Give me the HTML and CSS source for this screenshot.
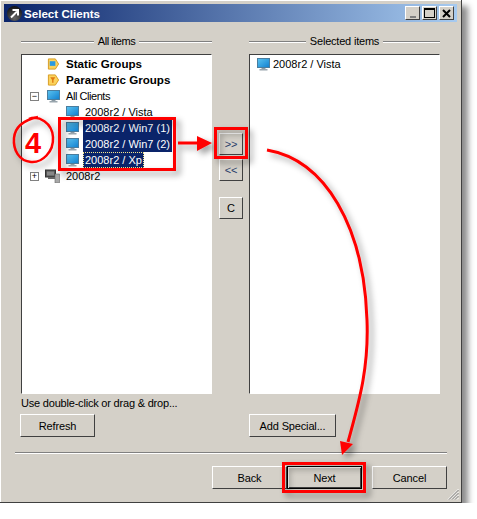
FILE: index.html
```html
<!DOCTYPE html>
<html lang="en">
<head>
  <meta charset="UTF-8">
  <title>Select Clients</title>
  <link rel="stylesheet" href="styles.css">
</head>
<body>
  <svg class="defs" width="0" height="0">
    <defs>
      <linearGradient id="screen" x1="0" y1="0" x2="1" y2="1">
        <stop offset="0" stop-color="#5cc4f0"/>
        <stop offset="1" stop-color="#0f7fd0"/>
      </linearGradient>
      <radialGradient id="ball" cx="0.5" cy="0.8" r="0.8">
        <stop offset="0" stop-color="#666"/>
        <stop offset="1" stop-color="#111"/>
      </radialGradient>
      <symbol id="pc" viewBox="0 0 13 13">
        <rect x="0.5" y="0.5" width="12" height="9" fill="url(#screen)" stroke="#4a7d9e"/>
        <rect x="4.5" y="10" width="4" height="1" fill="#8c9aa4"/>
        <rect x="2.5" y="11" width="8" height="1.5" fill="#9aa6ae"/>
      </symbol>
      <symbol id="tag" viewBox="0 0 14 14">
        <path d="M1.5 1.5H9L12.5 7L9 12.5H1.5Z" fill="#fbd25c" stroke="#d69a1e"/>
      </symbol>
    </defs>
  </svg>

  <div class="window">
    <div class="titlebar">
      <svg class="title-icon" width="15" height="15" viewBox="0 0 15 15">
        <circle cx="7.5" cy="7.5" r="7.5" fill="url(#ball)"/>
        <path d="M4 11.5L10 5.5M5.5 4H11V9.5" fill="none" stroke="#fff" stroke-width="2"/>
      </svg>
      <span class="title">Select Clients</span>
      <div class="caption-btns">
        <button class="caption-btn"><span class="ic-min"></span></button>
        <button class="caption-btn"><span class="ic-max"></span></button>
        <button class="caption-btn">
          <svg width="9" height="9" viewBox="0 0 9 9"><path d="M1 1L8 8M8 1L1 8" stroke="#000" stroke-width="2"/></svg>
        </button>
      </div>
    </div>

    <div class="content">
      <div class="lists">
        <section class="col">
          <div class="col-head"><span class="tight">All items</span></div>
          <div class="listbox tree">
            <div class="row"><span class="exp"></span><svg class="ico" width="13" height="14" viewBox="0 0 14 14"><use href="#tag"/><rect x="3" y="4" width="6" height="5" fill="#2a9ae0"/></svg><span class="lbl bold">Static Groups</span></div>
            <div class="row"><span class="exp"></span><svg class="ico" width="13" height="14" viewBox="0 0 14 14"><use href="#tag"/><path d="M3.5 4H9L7 7V10H5.5V7Z" fill="#e07a10"/></svg><span class="lbl bold">Parametric Groups</span></div>
            <div class="row"><span class="exp box">&minus;</span><svg class="ico" width="13" height="13"><use href="#pc"/></svg><span class="lbl tight">All Clients</span></div>
            <div class="row child"><svg class="ico" width="13" height="13"><use href="#pc"/></svg><span class="lbl">2008r2 / Vista</span></div>
            <div class="row child"><svg class="ico" width="13" height="13"><use href="#pc"/></svg><span class="lbl sel">2008r2 / Win7 (1)</span></div>
            <div class="row child"><svg class="ico" width="13" height="13"><use href="#pc"/></svg><span class="lbl sel">2008r2 / Win7 (2)</span></div>
            <div class="row child"><svg class="ico" width="13" height="13"><use href="#pc"/></svg><span class="lbl sel focus">2008r2 / Xp</span></div>
            <div class="row"><span class="exp box">+</span><svg class="ico server" width="15" height="14" viewBox="0 0 15 14">
              <rect x="0.5" y="1" width="10" height="7" fill="#555" stroke="#333"/>
              <rect x="2" y="2.5" width="7" height="4" fill="#888"/>
              <rect x="3" y="8" width="7" height="2" fill="#666"/>
              <rect x="10" y="5" width="4.5" height="9" fill="#a8a8a8" stroke="#666" stroke-width="0.6"/>
            </svg><span class="lbl">2008r2</span></div>
          </div>
          <p class="hint">Use double-click or drag &amp; drop...</p>
          <button class="btn wide refresh">Refresh</button>
        </section>

        <div class="move-btns">
          <button class="btn small blue">&gt;&gt;</button>
          <button class="btn small blue">&lt;&lt;</button>
          <button class="btn small gap">C</button>
        </div>

        <section class="col">
          <div class="col-head"><span class="tight-sm">Selected items</span></div>
          <div class="listbox selected">
            <div class="row"><svg class="ico" width="13" height="13"><use href="#pc"/></svg><span class="lbl">2008r2 / Vista</span></div>
          </div>
          <p class="hint"></p>
          <button class="btn special">Add Special...</button>
        </section>
      </div>

      <div class="sep"></div>

      <div class="footer-btns">
        <button class="btn wide">Back</button>
        <button class="btn wide default">Next</button>
        <button class="btn wide cancel">Cancel</button>
      </div>
    </div>

    <svg class="grip" width="12" height="12" viewBox="0 0 12 12">
      <path d="M11.5 1L1 11.5M11.5 4L4 11.5M11.5 7L7 11.5M11.5 10L10 11.5" stroke="#fff" fill="none"/>
      <path d="M11.5 2L2 11.5M11.5 5L5 11.5M11.5 8L8 11.5" stroke="#808080" fill="none"/>
    </svg>
  </div>

  <!-- red callouts drawn over the dialog -->
  <svg class="callouts" width="477" height="519" viewBox="0 0 477 519">
    <defs>
      <filter id="soft" x="-20%" y="-20%" width="150%" height="150%">
        <feDropShadow dx="4" dy="4" stdDeviation="3" flood-color="#000" flood-opacity="0.4"/>
      </filter>
    </defs>
    <g filter="url(#soft)" fill="none" stroke="#f00">
      <rect x="59.5" y="118.5" width="115" height="51" stroke-width="3"/>
      <rect x="215.5" y="128.5" width="31" height="29" stroke-width="3"/>
      <rect x="283.5" y="463.5" width="81" height="28" stroke-width="3"/>
      <path d="M178 143H198" stroke-width="3"/>
      <path d="M197 136L212 143L197 151Z" fill="#f00" stroke="none"/>
      <path d="M267 150C325 160 364 226 367 320C369 370 358 405 348 442" stroke-width="3"/>
      <path d="M340 441L353 444L342 455Z" fill="#f00" stroke="none"/>
      <path d="M29 119C39 115 52 123 53 137C54 152 42 163 31 162C19 161 13 150 14 138C15 127 24 120 38 117" stroke-width="2.5"/>
    </g>
    <text class="four" x="25" y="153">4</text>
  </svg>
</body>
</html>
```

FILE: styles.css
```css
body {
  margin: 0;
  background: #fff;
  font-family: "Liberation Sans", Arial, sans-serif;
  font-size: 11px;
  color: #000;
}
.defs { position: absolute; }
.window {
  position: relative;
  box-sizing: border-box;
  width: 462px;
  height: 503px;
  padding: 4px;
  background: #d4d0c8;
  border-right: 1px solid #404040;
  border-bottom: 1px solid #404040;
  box-shadow: inset 1px 1px 0 #fff, 6px 6px 6px rgba(0,0,0,0.45);
}
.titlebar {
  display: flex;
  align-items: center;
  height: 18px;
  padding: 0 3px;
  background: linear-gradient(to right, #0a246a, #a6caf0);
}
.title-icon { flex: none; }
.title {
  margin-left: 2px;
  color: #fff;
  font-weight: bold;
  font-size: 11.6px;
}
.caption-btns {
  display: flex;
  gap: 2px;
  margin-left: auto;
}
.caption-btn {
  display: flex;
  align-items: center;
  justify-content: center;
  box-sizing: border-box;
  width: 15px;
  height: 14px;
  padding: 0;
  background: #d4d0c8;
  border: 1px solid;
  border-color: #fff #404040 #404040 #fff;
}
.ic-min {
  width: 6px;
  height: 2px;
  margin-top: 7px;
  background: #808080;
}
.ic-max {
  box-sizing: border-box;
  width: 11px;
  height: 10px;
  border: 1px solid #000;
  border-top-width: 2px;
}
.content { padding: 12px 10px 0 11px; }
.lists {
  display: flex;
  padding: 0 6px;
}
.col { width: 191px; }
.col-head {
  display: flex;
  align-items: center;
  gap: 4px;
  height: 14px;
  margin-bottom: 6px;
  justify-content: center;
}
.col-head::before,
.col-head::after {
  content: "";
  flex: 1;
  height: 1px;
  background: #808080;
  box-shadow: 0 1px 0 #fff;
}
.tight { letter-spacing: -0.45px; }
.tight-sm { letter-spacing: -0.2px; }
.listbox {
  box-sizing: border-box;
  height: 340px;
  padding-top: 1px;
  background: #fff;
  border: 1px solid;
  border-color: #404040 #fff #fff #404040;
}
.row {
  display: flex;
  align-items: center;
  height: 16px;
  white-space: nowrap;
}
.tree .row { padding-left: 8px; }
.tree .row.child { padding-left: 44px; }
.selected .row { padding-left: 7px; }
.selected .ico { margin-right: 1px; }
.exp {
  flex: none;
  box-sizing: border-box;
  width: 9px;
  height: 9px;
  margin-right: 8px;
  font-size: 9px;
  line-height: 7px;
  text-align: center;
}
.exp.box {
  background: #fff;
  border: 1px solid #808080;
}
.ico { flex: none; margin-right: 4px; }
.server { margin-left: -2px; }
.lbl { padding: 1px 2px; line-height: 14px; }
.bold { font-weight: bold; font-size: 11.6px; }
.sel { background: #0a246a; color: #fff; }
.focus { outline: 1px dotted #f5e68c; outline-offset: -1px; }
.hint {
  height: 14px;
  margin: 2px 0 4px;
  line-height: 14px;
  letter-spacing: -0.2px;
}
.btn {
  box-sizing: border-box;
  padding: 0;
  height: 23px;
  background: #d4d0c8;
  border: 1px solid;
  border-color: #fff #404040 #404040 #fff;
  font: inherit;
  letter-spacing: -0.15px;
  color: #000;
}
.wide { width: 75px; }
.refresh { margin-left: -1px; }
.special { width: 87px; }
.move-btns {
  display: flex;
  flex-direction: column;
  gap: 4px;
  width: 24px;
  margin: 99px 6px 0 7px;
}
.small { width: 24px; height: 22px; }
.blue { color: #2a3f6a; }
.gap { margin-top: 12px; }
.sep {
  height: 1px;
  margin: 15px 0 13px;
  background: #808080;
  box-shadow: 0 1px 0 #fff;
}
.footer-btns {
  display: flex;
  justify-content: flex-end;
}
.default {
  border-color: #000;
  box-shadow: inset 1px 1px 0 #fff, inset -1px -1px 0 #404040;
}
.cancel { margin-left: 10px; }
.grip {
  position: absolute;
  right: 2px;
  bottom: 2px;
}
.callouts {
  position: absolute;
  top: 0;
  left: 0;
  pointer-events: none;
}
.four {
  fill: #f00;
  font-family: "Liberation Sans", Arial, sans-serif;
  font-weight: bold;
  font-size: 29px;
}
```
